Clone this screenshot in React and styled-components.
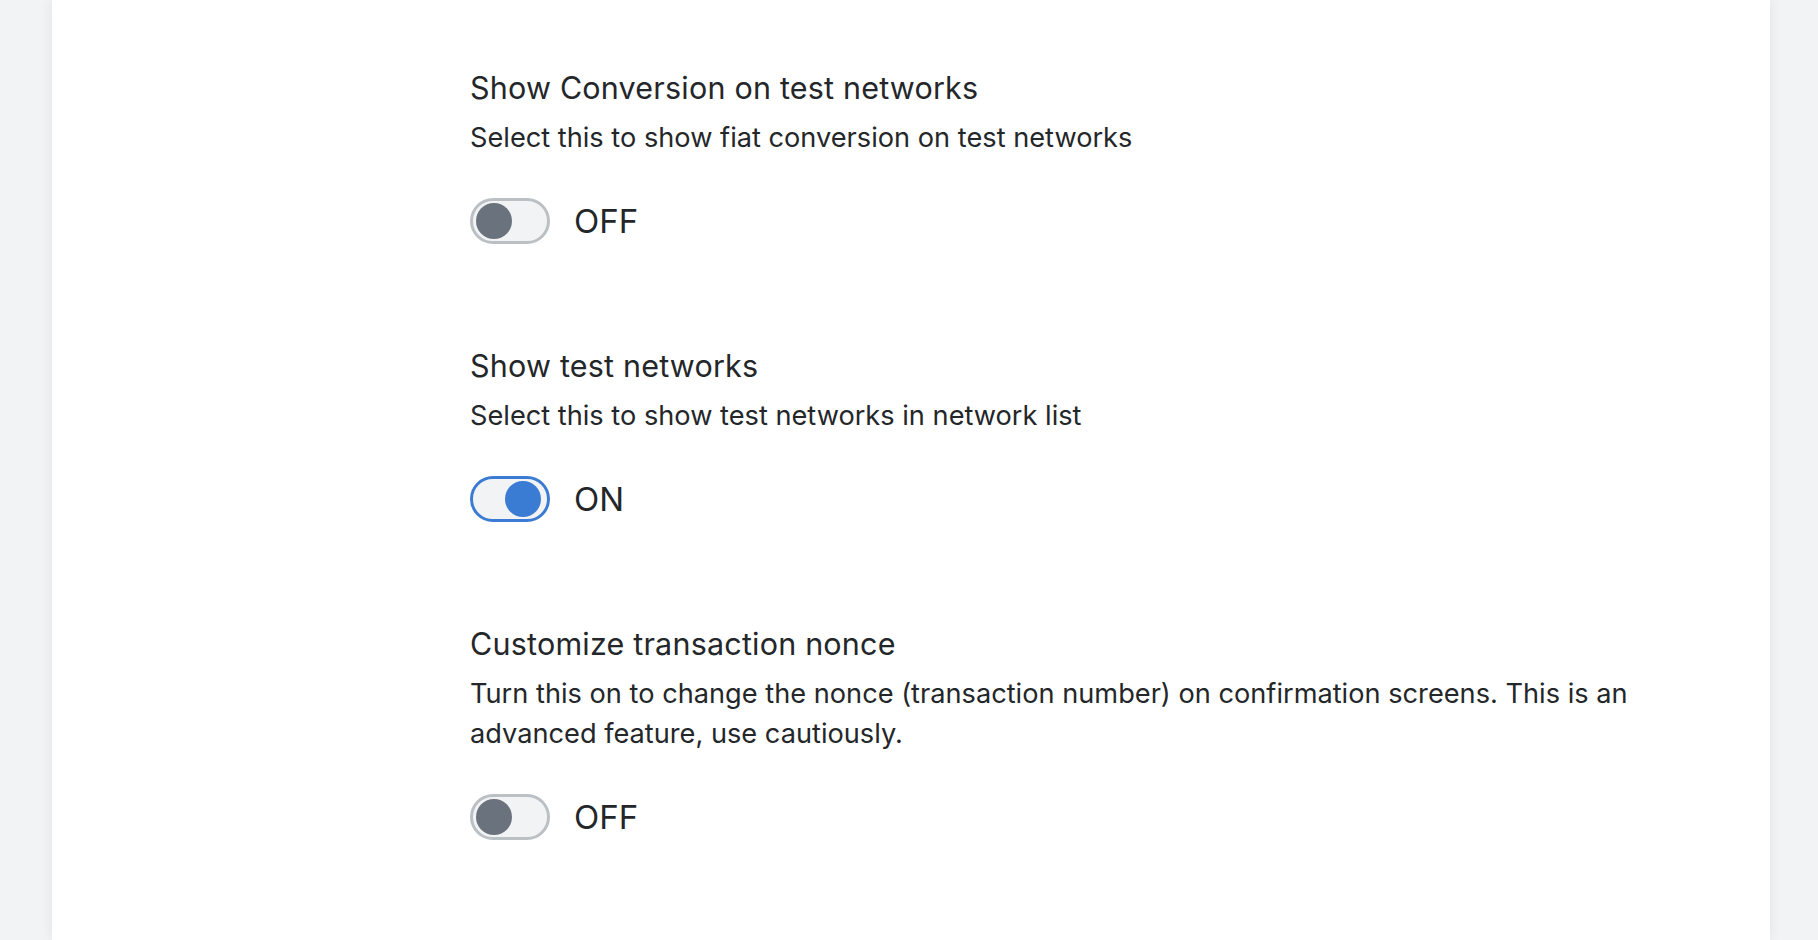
import React, { useState } from "react";
import styled, { createGlobalStyle, css } from "styled-components";

const GlobalStyle = createGlobalStyle`
  html, body {
    margin: 0;
    padding: 0;
    height: 100%;
    background: #f2f3f4;
    overflow: hidden;
  }
  body {
    font-family: "Inter", "Noto Sans", sans-serif;
    color: #24272a;
  }
`;

const Page = styled.div`
  display: flex;
  height: 100vh;
  padding: 0 48px 0 52px;
  box-sizing: border-box;
`;

const Card = styled.main`
  flex: 1;
  background: #ffffff;
  box-shadow: 0 0 12px rgba(0, 0, 0, 0.07);
  padding: 68px 0 0 418px;
  box-sizing: border-box;
`;

const SettingsList = styled.div`
  display: flex;
  flex-direction: column;
  gap: 102px;
  max-width: 1200px;
`;

const Setting = styled.section`
  display: flex;
  flex-direction: column;
`;

const Title = styled.h3`
  margin: 0;
  font-size: 30.5px;
  font-weight: 400;
  line-height: 40px;
  letter-spacing: 0.2px;
`;

const Description = styled.p`
  margin: 10px 0 0;
  font-size: 27.2px;
  font-weight: 400;
  line-height: 40px;
`;

const ToggleRow = styled.label`
  display: flex;
  align-items: center;
  gap: 24px;
  margin-top: 40px;
  cursor: pointer;
`;

const Track = styled.button`
  position: relative;
  width: 80px;
  height: 46px;
  padding: 0;
  border-radius: 23px;
  border: 3.5px solid #bbc0c5;
  background: #f2f3f4;
  box-sizing: border-box;
  cursor: pointer;
  ${(props) =>
    props.on &&
    css`
      border-color: #3a7bd4;
    `}
`;

const Knob = styled.span`
  position: absolute;
  top: 1.5px;
  left: 3px;
  width: 36px;
  height: 36px;
  border-radius: 50%;
  background: #6a737d;
  transition: left 0.15s ease;
  ${(props) =>
    props.on &&
    css`
      left: 32px;
      background: #3a7bd4;
    `}
`;

const ToggleLabel = styled.span`
  font-size: 33px;
  line-height: 40px;
`;

const settings = [
  {
    id: "conversion",
    title: "Show Conversion on test networks",
    description: "Select this to show fiat conversion on test networks",
    on: false,
  },
  {
    id: "testnets",
    title: "Show test networks",
    description: "Select this to show test networks in network list",
    on: true,
  },
  {
    id: "nonce",
    title: "Customize transaction nonce",
    description:
      "Turn this on to change the nonce (transaction number) on confirmation screens. This is an advanced feature, use cautiously.",
    on: false,
  },
];

const SettingItem = ({ item }) => {
  const [on, setOn] = useState(item.on);
  return (
    <Setting>
      <Title>{item.title}</Title>
      <Description>{item.description}</Description>
      <ToggleRow>
        <Track
          type="button"
          role="switch"
          aria-checked={on}
          on={on ? 1 : 0}
          onClick={() => setOn(!on)}
        >
          <Knob on={on ? 1 : 0} />
        </Track>
        <ToggleLabel>{on ? "ON" : "OFF"}</ToggleLabel>
      </ToggleRow>
    </Setting>
  );
};

const App = () => (
  <>
    <GlobalStyle />
    <Page>
      <Card>
        <SettingsList>
          {settings.map((item) => (
            <SettingItem key={item.id} item={item} />
          ))}
        </SettingsList>
      </Card>
    </Page>
  </>
);

export default App;
